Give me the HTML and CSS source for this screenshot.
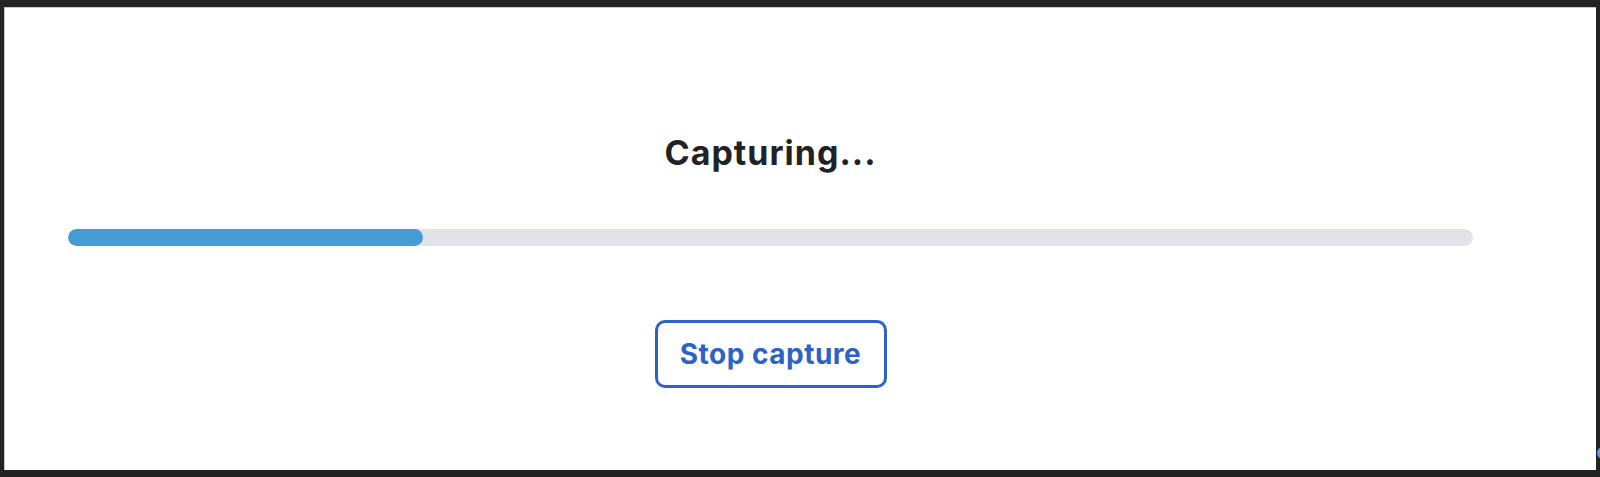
FILE: index.html
```html
<!DOCTYPE html>
<html lang="en">

<head>
  <meta charset="UTF-8">
  <meta name="viewport" content="width=device-width, initial-scale=1.0">
  <title>Capturing</title>
  <link rel="stylesheet" href="styles.css">
</head>

<body>
  <main class="capture-panel">
    <h1 class="capture-title">Capturing...</h1>

    <div class="progress-track">
      <div class="progress-fill" style="width: 25.3%"></div>
    </div>

    <button class="stop-button">Stop capture</button>
  </main>

  <div class="edge-dot"></div>
</body>

</html>
```

FILE: styles.css
```css
html,
body {
  margin: 0;
  padding: 0;
}

body {
  font-family: Inter, "Noto Sans", Arial, sans-serif;
  background-color: #232323;
  height: 477px;
  overflow: hidden;
  position: relative;
  box-sizing: border-box;
  padding: 7px 4px 7px 4px;
}

.capture-panel {
  box-sizing: border-box;
  height: 463px;
  background-color: #fff;
  border-top: 1px solid #c9c9c9;
  border-left: 1px solid #c9c9c9;
  padding: 125px 123px 0 63px;
  display: flex;
  flex-direction: column;
  align-items: center;
}

.capture-title {
  margin: 0;
  font-size: 34px;
  line-height: 40px;
  letter-spacing: 1px;
  font-weight: 700;
  color: #1f2226;
}

.progress-track {
  align-self: stretch;
  height: 17px;
  margin-top: 56px;
  background-color: #e2e3e7;
  border-radius: 9px;
  overflow: hidden;
}

.progress-fill {
  height: 100%;
  background-color: #469cd4;
  border-radius: 9px;
}

.stop-button {
  margin-top: 74px;
  box-sizing: border-box;
  width: 232px;
  height: 68px;
  background-color: #fff;
  border: 3px solid #2d63c8;
  border-radius: 10px;
  color: #2d63c8;
  font-family: inherit;
  font-size: 28px;
  letter-spacing: 0.5px;
  font-weight: 700;
  cursor: pointer;
}

.edge-dot {
  position: absolute;
  left: 1597px;
  top: 447px;
  width: 12px;
  height: 12px;
  border-radius: 50%;
  background-color: #5b9ff0;
}
```
